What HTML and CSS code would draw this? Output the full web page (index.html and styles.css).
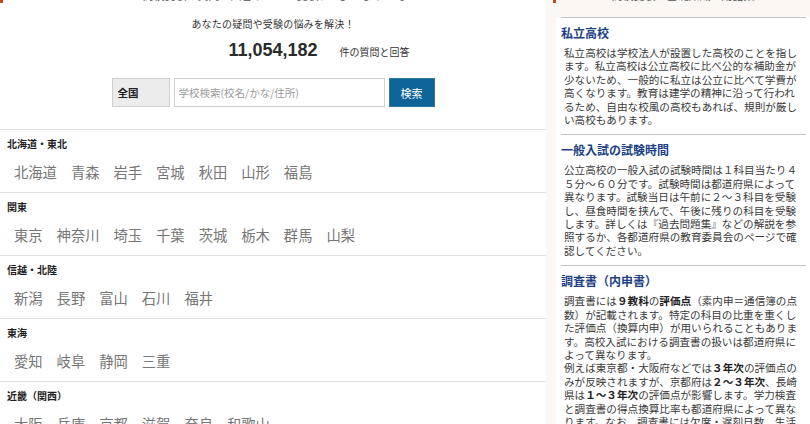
FILE: index.html
```html
<!DOCTYPE html>
<html lang="ja">
<head>
  <meta charset="UTF-8">
  <title>高校受験 Q&amp;A</title>
  <link rel="stylesheet" href="styles.css">
</head>
<body>
  <div class="wrap">

    <main class="main">
      <div class="main-head">高校受験の質問・回答サイト「受験ナビ」へようこそ</div>
      <p class="tagline">あなたの疑問や受験の悩みを解決！</p>

      <div class="count">
        <span class="count-num">11,054,182</span>
        <span class="count-label">件の質問と回答</span>
      </div>

      <form class="search">
        <select class="search-area">
          <option>全国</option>
        </select>
        <input type="text" class="search-input" placeholder="学校検索(校名/かな/住所)">
        <button type="submit" class="search-btn">検索</button>
      </form>

      <div class="regions">
        <section class="region">
          <h3>北海道・東北</h3>
          <ul>
            <li>北海道</li><li>青森</li><li>岩手</li><li>宮城</li><li>秋田</li><li>山形</li><li>福島</li>
          </ul>
        </section>
        <section class="region">
          <h3>関東</h3>
          <ul>
            <li>東京</li><li>神奈川</li><li>埼玉</li><li>千葉</li><li>茨城</li><li>栃木</li><li>群馬</li><li>山梨</li>
          </ul>
        </section>
        <section class="region">
          <h3>信越・北陸</h3>
          <ul>
            <li>新潟</li><li>長野</li><li>富山</li><li>石川</li><li>福井</li>
          </ul>
        </section>
        <section class="region">
          <h3>東海</h3>
          <ul>
            <li>愛知</li><li>岐阜</li><li>静岡</li><li>三重</li>
          </ul>
        </section>
        <section class="region">
          <h3>近畿（関西）</h3>
          <ul>
            <li>大阪</li><li>兵庫</li><li>京都</li><li>滋賀</li><li>奈良</li><li>和歌山</li>
          </ul>
        </section>
        <section class="region">
          <h3>中国・四国</h3>
          <ul>
            <li>鳥取</li><li>島根</li><li>岡山</li><li>広島</li><li>山口</li>
          </ul>
        </section>
      </div>
    </main>

    <aside class="side">
      <div class="side-head">高校受験の基礎知識・用語集</div>
      <div class="side-body">
        <div class="term">
          <h4>私立高校</h4>
          <p>私立高校は学校法人が設置した高校のことを指します。私立高校は公立高校に比べ公的な補助金が少ないため、一般的に私立は公立に比べて学費が高くなります。教育は建学の精神に沿って行われるため、自由な校風の高校もあれば、規則が厳しい高校もあります。</p>
        </div>
        <div class="term">
          <h4>一般入試の試験時間</h4>
          <p>公立高校の一般入試の試験時間は１科目当たり４５分～６０分です。試験時間は都道府県によって異なります。試験当日は午前に２～３科目を受験し、昼食時間を挟んで、午後に残りの科目を受験します。詳しくは『過去問題集』などの解説を参照するか、各都道府県の教育委員会のページで確認してください。</p>
        </div>
        <div class="term">
          <h4>調査書（内申書）</h4>
          <p>調査書には<b>９教科</b>の<b>評価点</b>（素内申＝通信簿の点数）が記載されます。特定の科目の比重を重くした評価点（換算内申）が用いられることもあります。高校入試における調査書の扱いは都道府県によって異なります。<br>例えば東京都・大阪府などでは<b>３年次</b>の評価点のみが反映されますが、京都府は<b>２～３年次</b>、長崎県は<b>１～３年次</b>の評価点が影響します。学力検査と調査書の得点換算比率も都道府県によって異なります。なお、調査書には欠席・遅刻日数、生活態度なども記載されます。</p>
        </div>
      </div>
    </aside>

  </div>
</body>
</html>
```

FILE: styles.css
```css
:root {
  --accent: #c8461b;
  --blue: #1c3f86;
  --btn: #0e6497;
  --text: #333333;
  --muted: #767676;
  --line: #e2e2e2;
  --line-dark: #c4c4c4;
  --cream: #fcf7f2;
}

html { overflow: hidden; }
body {
  margin: 0;
  background: var(--cream);
  color: var(--text);
  font-family: "Noto Sans CJK JP", "Noto Sans", sans-serif;
}
h3, h4, p, ul { margin: 0; padding: 0; }

.wrap {
  display: flex;
  gap: 7px;
  width: 810px;
}

/* ---------------- main column ---------------- */
.main {
  width: 546px;
  flex: none;
  background: #fff;
}
.main-head {
  margin-top: -12px;
  height: 15px;
  line-height: 15px;
  border-left: 3px solid var(--accent);
  text-align: center;
  font-size: 11px;
  color: #555;
}
.tagline {
  margin-top: 13px;
  line-height: 16px;
  font-size: 10px;
  letter-spacing: .2px;
  text-align: center;
}

.count {
  margin-top: 6px;
  display: grid;
  grid-template-columns: 1fr auto 1fr;
  align-items: baseline;
  line-height: 24px;
}
.count-num {
  grid-column: 2;
  font-family: "Liberation Sans", Arial, sans-serif;
  font-weight: bold;
  font-size: 18px;
  color: #2b2b2b;
}
.count-label {
  grid-column: 3;
  margin-left: 22px;
  font-size: 10px;
}

.search {
  margin-top: 14px;
  display: flex;
  justify-content: center;
  gap: 4px;
}
.search-area, .search-input, .search-btn {
  box-sizing: border-box;
  height: 29px;
  margin: 0;
  font-family: inherit;
  border-radius: 0;
}
.search-area {
  appearance: none;
  width: 58px;
  padding: 0 0 0 5px;
  background: #ececec;
  border: 1px solid #cfcfcf;
  font-size: 10.5px;
  font-weight: bold;
  color: #222;
}
.search-input {
  width: 211px;
  padding: 0 4px;
  border: 1px solid #cfcfcf;
  font-size: 10.5px;
}
.search-input::placeholder { color: #9a9a9a; }
.search-btn {
  width: 46px;
  background: var(--btn);
  border: 1px solid #2c79a8;
  color: #fff;
  font-size: 11px;
}

.regions { margin-top: 22px; }
.region {
  border-top: 1px solid var(--line);
  padding: 8px 0 10px;
}
.region h3 {
  padding-left: 7px;
  line-height: 12px;
  font-size: 10px;
  font-weight: bold;
  color: #1e1e1e;
}
.region ul {
  margin-top: 12px;
  padding-left: 7px;
  list-style: none;
  display: flex;
  line-height: 20px;
}
.region li {
  padding: 0 7px;
  font-size: 14.3px;
  color: var(--muted);
}

/* ---------------- side column ---------------- */
.side {
  width: 257px;
  flex: none;
}
.side-head {
  margin-top: -12px;
  height: 15px;
  line-height: 15px;
  border-left: 3px solid var(--accent);
  text-align: center;
  font-size: 11px;
  color: #555;
}
.side-body {
  margin-left: 3px;
  margin-top: 14px;
  padding: 0 4px 0 5px;
  background: #fff;
}
.term {
  border-top: 1px solid var(--line-dark);
  padding: 7px 0 8px;
}
.term h4 {
  line-height: 16px;
  font-size: 12px;
  font-weight: bold;
  color: var(--blue);
}
.term p {
  margin-top: 5px;
  padding: 0 6px 0 3px;
  font-size: 10.6px;
  line-height: 13.4px;
  color: #3a3a3a;
}
.term b { color: #222; }
```
